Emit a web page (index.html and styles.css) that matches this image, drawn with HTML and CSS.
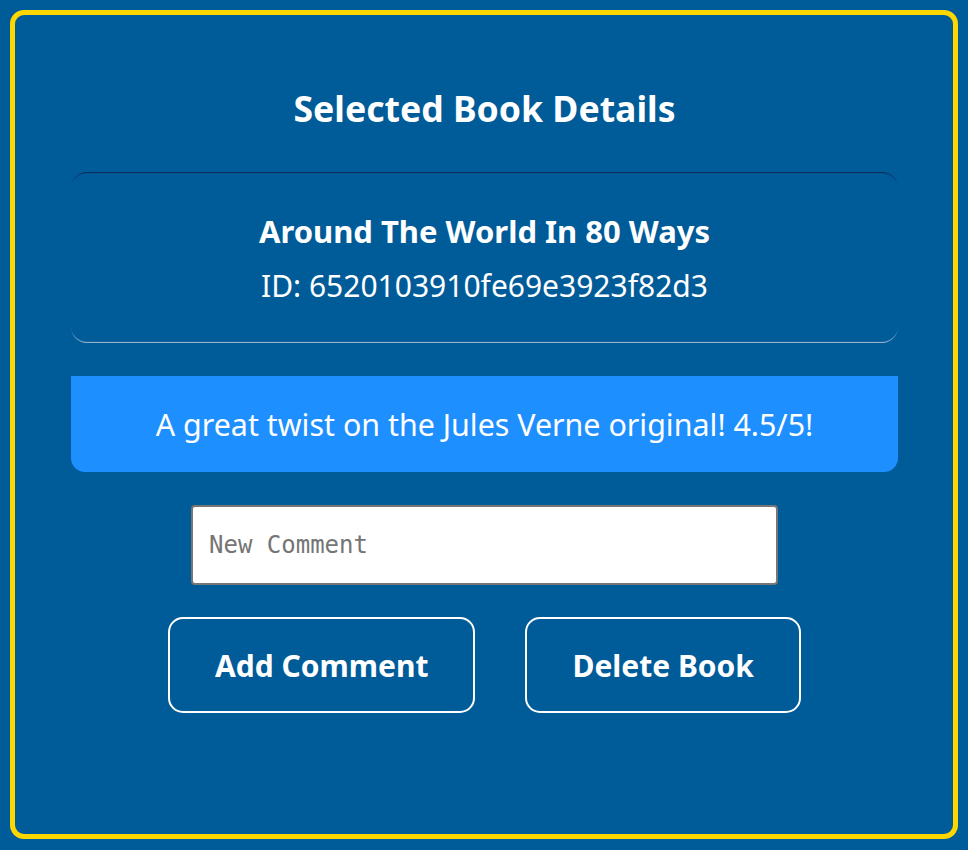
FILE: index.html
```html
<!DOCTYPE html>
<html>
<head>
<meta charset="utf-8">
<link rel="stylesheet" href="styles.css">
</head>
<body>
<div class="frame">
  <h2 class="heading">Selected Book Details</h2>
  <div class="card">
    <div class="book-title">Around The World In 80 Ways</div>
    <div class="book-id">ID: 6520103910fe69e3923f82d3</div>
  </div>
  <div class="comment">A great twist on the Jules Verne original! 4.5/5!</div>
  <input class="new-comment" type="text" placeholder="New Comment">
  <div class="actions">
    <button class="btn">Add Comment</button>
    <button class="btn">Delete Book</button>
  </div>
</div>
</body>
</html>
```

FILE: styles.css
```css
html, body {
  margin: 0;
  padding: 0;
  background: #005b99;
}
body {
  padding: 10px;
  font-family: "Noto Sans", sans-serif;
  color: #fff;
}
.frame {
  box-sizing: border-box;
  width: 948px;
  height: 829px;
  border: 5px solid #ffd700;
  border-radius: 14px;
  padding: 0 55px 0 56px;
  display: flex;
  flex-direction: column;
  align-items: center;
}
.heading {
  margin: 69px 0 0;
  font-size: 35.6px;
  font-weight: 700;
  line-height: 48px;
}
.card {
  box-sizing: border-box;
  width: 100%;
  margin-top: 40px;
  height: 171px;
  border-radius: 16px;
  box-shadow: inset 0 2px 1px -1px #0a2a55, inset 0 -2px 1px -1px #a5bdd6;
  display: flex;
  flex-direction: column;
  align-items: center;
  padding-top: 38px;
}
.book-title {
  font-size: 31px;
  font-weight: 700;
  line-height: 42px;
}
.book-id {
  font-size: 30px;
  line-height: 42px;
  margin-top: 13px;
}
.comment {
  box-sizing: border-box;
  width: 100%;
  margin-top: 33px;
  height: 96px;
  background: #1e8fff;
  border-radius: 0 0 14px 14px;
  font-size: 30.4px;
  display: flex;
  align-items: center;
  justify-content: center;
}
.new-comment {
  box-sizing: border-box;
  margin-top: 33px;
  width: 587px;
  height: 80px;
  border: 2px solid #767676;
  border-radius: 4px;
  background: #fff;
  padding: 0 16px;
  font-family: "DejaVu Sans Mono", monospace;
  font-size: 24px;
  color: #000;
}
.new-comment::placeholder {
  color: #757575;
}
.actions {
  margin-top: 32px;
  display: flex;
  gap: 50px;
}
.btn {
  box-sizing: border-box;
  height: 96px;
  padding: 0 45px;
  background: transparent;
  color: #fff;
  border: 2px solid #fff;
  border-radius: 15px;
  font-family: "Noto Sans", sans-serif;
  font-size: 30px;
  font-weight: 700;
}
```
